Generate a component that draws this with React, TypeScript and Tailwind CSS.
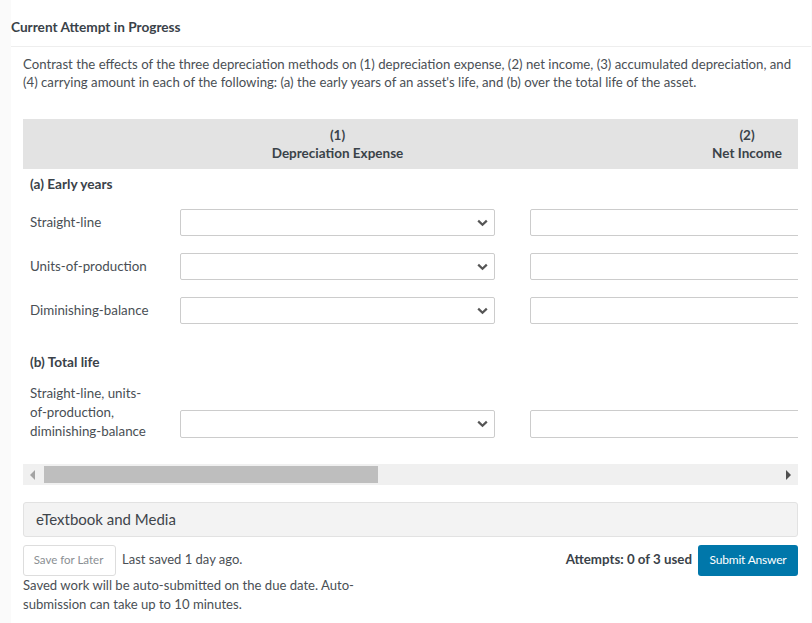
import React from "react";

function Dropdown() {
  return (
    <div className="relative w-[315px] h-full shrink-0">
      <select className="block w-full h-full appearance-none bg-white border border-[#cccccc] rounded-[2px]" />
      <svg
        className="absolute right-[7px] top-1/2 -translate-y-1/2"
        width="11"
        height="8"
        viewBox="0 0 11 8"
        fill="none"
      >
        <path d="M1.2 1.6 L5.5 5.8 L9.8 1.6" stroke="#555555" strokeWidth="2.2" />
      </svg>
    </div>
  );
}

function Row({
  label,
  className,
}: {
  label: React.ReactNode;
  className: string;
}) {
  return (
    <div className={`flex items-center ${className}`}>
      <div className="w-[157px] shrink-0 pl-[7px] text-[13.35px] leading-[19px] text-[#4a4f55]">
        {label}
      </div>
      <Dropdown />
      <div className="w-[434px] h-full shrink-0 ml-[35px] bg-white border border-[#cccccc] rounded-[2px]" />
    </div>
  );
}

export default function App() {
  return (
    <div
      className="flex w-[812px] h-[623px] overflow-hidden bg-white text-[13px] text-[#4a4f55]"
      style={{ fontFamily: '"Lato", "Liberation Sans", sans-serif' }}
    >
      <div className="w-[11px] shrink-0 bg-[#fafafa]" />
      <div className="w-[800px] shrink-0">
        <div className="h-[47px] border-b border-[#eeeeee] pt-[18px] text-[13.65px] leading-[18px] font-bold text-[#3a4249]">
          Current Attempt in Progress
        </div>

        <div className="pl-[12px] pr-[13px]">
          <p className="pt-[8px] text-[13.2px] leading-[18px]">
            Contrast the effects of the three depreciation methods on (1) depreciation expense, (2) net income, (3) accumulated depreciation, and
            <br />
            (4) carrying amount in each of the following: (a) the early years of an asset's life, and (b) over the total life of the asset.
          </p>

          <div className="mt-[28px] w-[775px] overflow-hidden">
            <div className="flex w-[1000px] h-[50px] bg-[#e3e3e3] pt-[7px] text-center text-[13.5px] leading-[18px] font-bold text-[#3a4249]">
              <div className="w-[157px] shrink-0" />
              <div className="w-[315px] shrink-0">
                <div>(1)</div>
                <div>Depreciation Expense</div>
              </div>
              <div className="w-[434px] ml-[35px] shrink-0">
                <div>(2)</div>
                <div>Net Income</div>
              </div>
            </div>

            <div className="w-[1000px]">
              <div className="pl-[7px] pt-[6px] text-[13.65px] leading-[18px] font-bold text-[#3a4249]">(a) Early years</div>
              <Row label="Straight-line" className="mt-[16px] h-[27px]" />
              <Row label="Units-of-production" className="mt-[17px] h-[27px]" />
              <Row label="Diminishing-balance" className="mt-[17px] h-[27px]" />
              <div className="pl-[7px] mt-[29px] text-[13.65px] leading-[18px] font-bold text-[#3a4249]">(b) Total life</div>
              <Row
                label={
                  <div className="pt-[2px]">
                    Straight-line, units-
                    <br />
                    of-production,
                    <br />
                    diminishing-balance
                  </div>
                }
                className="mt-[12px] h-[57px] [&>div:nth-child(n+2)]:h-[28px] [&>div:nth-child(n+2)]:self-end [&>div:nth-child(n+2)]:mb-[2px]"
              />
            </div>
          </div>

          <div className="relative flex items-center justify-between mt-[24px] w-[775px] h-[21px] bg-[#f0f0f0] px-[7px]">
            <div className="w-0 h-0 border-y-[5px] border-y-transparent border-r-[5px] border-r-[#a3a3a3]" />
            <div className="absolute left-[21px] top-[2px] w-[334px] h-[17px] bg-[#bebebe]" />
            <div className="w-0 h-0 border-y-[5px] border-y-transparent border-l-[5px] border-l-[#505050]" />
          </div>

          <div className="mt-[17px] w-[775px] h-[35px] flex items-center pl-[12px] bg-[#f3f3f3] border border-[#e2e2e2] rounded-[3px] text-[15px] text-[#3f454b]">
            eTextbook and Media
          </div>

          <div className="flex justify-between w-[775px] mt-[8px]">
            <div className="w-[345px]">
              <div className="flex items-start">
                <button className="w-[93px] h-[31px] shrink-0 pr-[2px] pb-[2px] bg-white border border-[#dddddd] rounded-[3px] text-[11.5px] text-[#8b8f93]">
                  Save for Later
                </button>
                <span className="ml-[6px] pt-[5px] leading-[18px]">Last saved 1 day ago.</span>
              </div>
              <p className="text-[13.1px] leading-[19px]">
                Saved work will be auto-submitted on the due date. Auto-submission can take up to 10 minutes.
              </p>
            </div>
            <div className="flex items-start">
              <span className="pt-[5px] text-[13.3px] leading-[18px] font-bold text-[#3a4249]">Attempts: 0 of 3 used</span>
              <button className="ml-[6px] w-[100px] h-[31px] pb-[2px] bg-[#0077aa] rounded-[3px] text-[12px] tracking-[-0.2px] text-white">
                Submit Answer
              </button>
            </div>
          </div>
        </div>
      </div>
      <div className="w-px shrink-0 bg-[#fafafa]" />
    </div>
  );
}
